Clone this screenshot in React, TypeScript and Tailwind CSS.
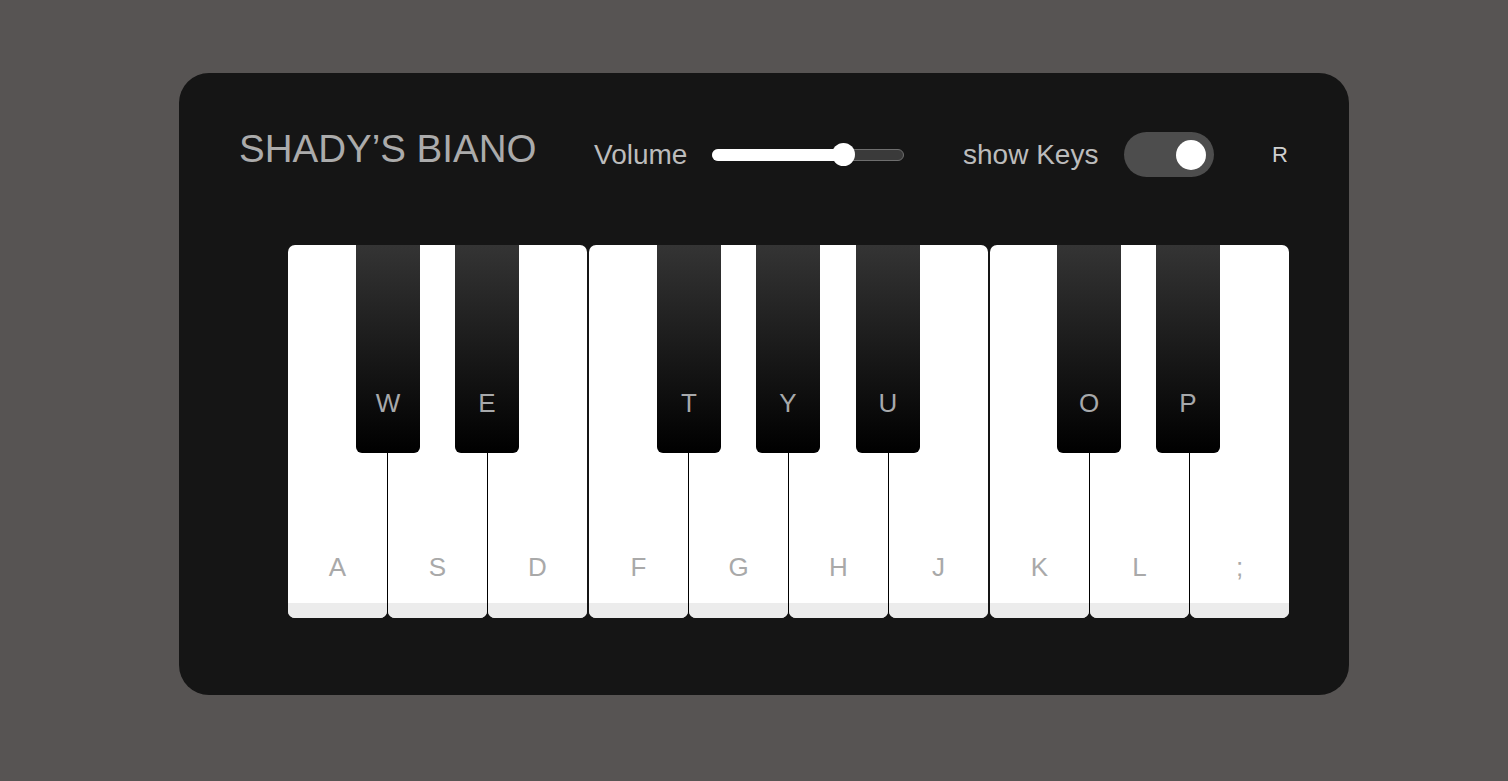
import React from "react";

const groups: { whites: string[]; blacks: { label: string; left: number }[] }[] = [
  {
    whites: ["A", "S", "D"],
    blacks: [
      { label: "W", left: 68 },
      { label: "E", left: 167 },
    ],
  },
  {
    whites: ["F", "G", "H", "J"],
    blacks: [
      { label: "T", left: 68 },
      { label: "Y", left: 167 },
      { label: "U", left: 267 },
    ],
  },
  {
    whites: ["K", "L", ";"],
    blacks: [
      { label: "O", left: 67 },
      { label: "P", left: 166 },
    ],
  },
];

export default function App() {
  return (
    <div
      className="min-h-screen w-full bg-[#575453] flex justify-start pl-[179px] pt-[73px]"
      style={{ fontFamily: '"Liberation Sans", Arial, sans-serif' }}
    >
      <div className="w-[1170px] h-[622px] rounded-[30px] bg-[#151515] pt-[59px] flex flex-col">
        {/* header */}
        <div className="flex items-center h-[45px] pl-[60px]">
          <div className="w-[355px] text-[38.5px] leading-none text-[#ababab] mb-[11px] whitespace-nowrap">
            SHADY’S BIANO
          </div>
          <div className="w-[118px] text-[28px] leading-none text-[#bcbcbc] whitespace-nowrap">
            Volume
          </div>
          <div className="relative w-[192px] h-[12px] rounded-full bg-[#3a3a3a] border border-[#6e6e6e]">
            <div className="absolute left-[-1px] top-[-1px] h-[12px] w-[132px] rounded-full bg-white" />
            <div className="absolute left-[119px] top-[-6.5px] w-[23px] h-[23px] rounded-full bg-white" />
          </div>
          <div className="w-[59px]" />
          <div className="w-[161px] text-[28px] leading-none text-[#bcbcbc] whitespace-nowrap">
            show Keys
          </div>
          <div className="w-[90px] h-[45px] rounded-full bg-[#4d4d4d] flex items-center justify-end pr-[8px]">
            <div className="w-[30px] h-[30px] rounded-full bg-white" />
          </div>
          <div className="w-[58px]" />
          <div className="text-[22px] leading-none text-[#cfcfcf]">R</div>
        </div>

        {/* keyboard */}
        <div className="flex pl-[109px] mt-[68px] gap-[2px]">
          {groups.map((g, gi) => (
            <div key={gi} className="relative flex gap-[1px]">
              {g.whites.map((w, wi) => (
                <div
                  key={w}
                  className={
                    "h-[373px] w-[99px] bg-white rounded-[7px] overflow-hidden flex flex-col " +
                    (wi < g.whites.length - 1 ? "shadow-[1px_0_0_#000]" : "")
                  }
                >
                  <div className="flex-1 flex flex-col justify-end items-center pb-[23px]">
                    <span className="text-[26px] leading-none text-[#a9a9a9]">{w}</span>
                  </div>
                  <div className="h-[15px] bg-[#ececec]" />
                </div>
              ))}
              {g.blacks.map((b) => (
                <div
                  key={b.label}
                  className="absolute top-0 z-10 w-[64px] h-[208px] rounded-b-[6px] bg-[linear-gradient(to_bottom,#343434,#000000)] flex flex-col justify-end items-center pb-[37px]"
                  style={{ left: b.left }}
                >
                  <span className="text-[26px] leading-none text-[#a7a9ab]">{b.label}</span>
                </div>
              ))}
            </div>
          ))}
        </div>
      </div>
    </div>
  );
}
